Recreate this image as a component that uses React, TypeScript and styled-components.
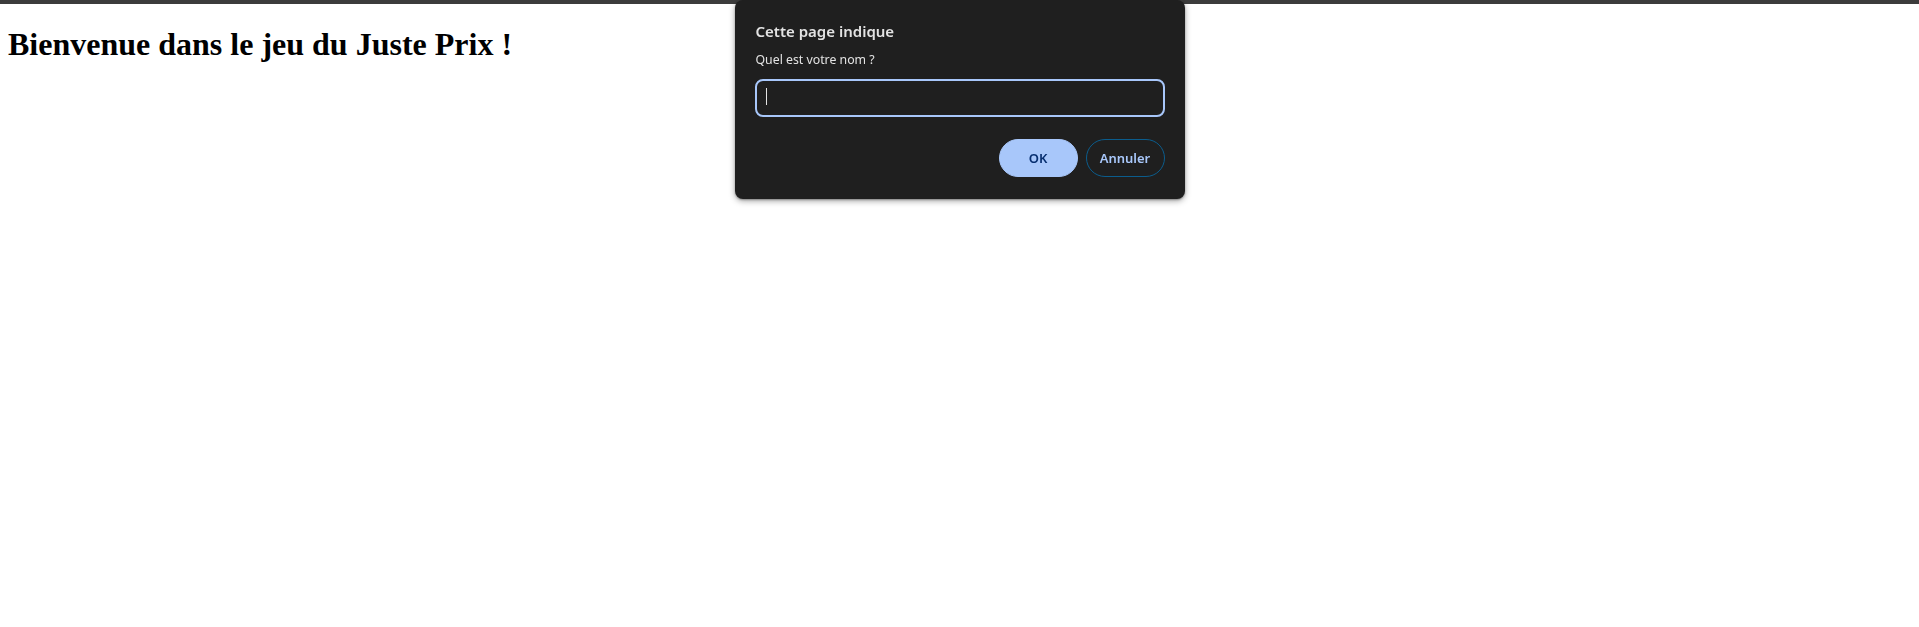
import React from "react";
import styled, { createGlobalStyle } from "styled-components";

const GlobalStyle = createGlobalStyle`
  html, body {
    margin: 0;
    padding: 0;
    background: #ffffff;
  }
  body {
    font-family: "Liberation Serif", "Times New Roman", serif;
    min-height: 627px;
  }
`;

const TopBar = styled.div`
  height: 4px;
  background: #3c3c3c;
`;

const Page = styled.main`
  padding: 0 8px;
`;

const Heading = styled.h1`
  margin: 22px 0;
  font-family: "Liberation Serif", "Times New Roman", serif;
  font-size: 32px;
  font-weight: bold;
  color: #000;
`;

const Dialog = styled.div`
  position: fixed;
  top: 0;
  left: 50%;
  transform: translateX(-50%);
  width: 450px;
  box-sizing: border-box;
  padding: 21px 20px 22px 21px;
  background: #1f1f1f;
  border-radius: 8px;
  box-shadow: 0 2px 6px rgba(0, 0, 0, 0.35), 0 1px 2px rgba(0, 0, 0, 0.3);
  font-family: "Noto Sans", "Open Sans", sans-serif;
  color: #e3e3e3;
`;

const Title = styled.div`
  font-size: 15px;
  font-weight: 600;
  line-height: 20px;
`;

const Message = styled.div`
  margin-top: 11px;
  font-size: 12.3px;
  line-height: 16px;
`;

const FieldWrap = styled.div`
  position: relative;
  margin: 11px 0 0 -1px;
`;

const Field = styled.input`
  display: block;
  width: 100%;
  height: 38px;
  box-sizing: border-box;
  padding: 0 10px;
  background: #1f1f1f;
  border: 2px solid #a8c7fa;
  border-radius: 8px;
  color: #e3e3e3;
  caret-color: transparent;
  font: inherit;
  font-size: 14px;
  outline: none;
`;

// the blinking text caret, drawn so it shows without focus
const Caret = styled.span`
  position: absolute;
  left: 11px;
  top: 9px;
  width: 1px;
  height: 17px;
  background: #e3e3e3;
  pointer-events: none;
`;

const Actions = styled.div`
  display: flex;
  justify-content: flex-end;
  gap: 8px;
  margin-top: 22px;
`;

const Button = styled.button<{ $primary?: boolean }>`
  width: 79px;
  height: 38px;
  box-sizing: border-box;
  border-radius: 19px;
  font-family: "Noto Sans", "Open Sans", sans-serif;
  font-size: 13px;
  font-weight: 600;
  cursor: pointer;
  border: 1px solid ${({ $primary }) => ($primary ? "#a8c7fa" : "#0b5c8c")};
  background: ${({ $primary }) => ($primary ? "#a8c7fa" : "transparent")};
  color: ${({ $primary }) => ($primary ? "#062e6f" : "#a8c7fa")};
`;

export default function App() {
  return (
    <>
      <GlobalStyle />
      <TopBar />
      <Page>
        <Heading>Bienvenue dans le jeu du Juste Prix !</Heading>
      </Page>
      <Dialog role="dialog">
        <Title>Cette page indique</Title>
        <Message>Quel est votre nom ?</Message>
        <FieldWrap>
          <Field aria-label="Quel est votre nom ?" />
          <Caret />
        </FieldWrap>
        <Actions>
          <Button $primary>OK</Button>
          <Button>Annuler</Button>
        </Actions>
      </Dialog>
    </>
  );
}
